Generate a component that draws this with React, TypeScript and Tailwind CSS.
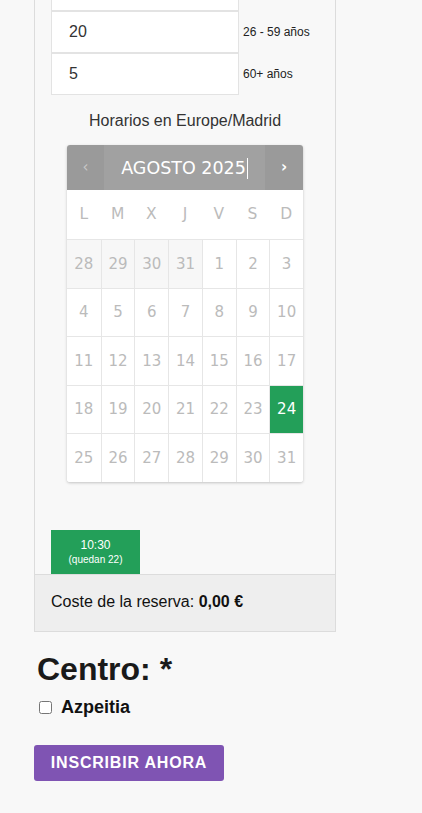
import React from 'react';

// first row sits above the top edge of the screenshot, only its bottom border shows
const ageRows = [
  { value: '', label: '' },
  { value: '20', label: '26 - 59 años' },
  { value: '5', label: '60+ años' },
];

const weekDays = ['L', 'M', 'X', 'J', 'V', 'S', 'D'];

const weeks = [
  [28, 29, 30, 31, 1, 2, 3],
  [4, 5, 6, 7, 8, 9, 10],
  [11, 12, 13, 14, 15, 16, 17],
  [18, 19, 20, 21, 22, 23, 24],
  [25, 26, 27, 28, 29, 30, 31],
];

const Calendar: React.FC = () => (
  <div className="mx-auto w-[236px] rounded-[3px] bg-white shadow-[0_1px_3px_rgba(0,0,0,0.22)] overflow-hidden font-['DejaVu_Sans',sans-serif]">
    <div className="flex h-[45px] bg-[#9a9a9a]">
      <div className="w-[37px] flex items-center justify-center text-[15px] text-[#c8c8c8]">‹</div>
      <div className="flex-1 flex items-center justify-center bg-[#a1a1a1] text-[17.5px] text-white pt-[2px]">
        <span>AGOSTO 2025</span>
        <span className="ml-px w-px h-[21px] bg-white"></span>
      </div>
      <div className="w-[38px] flex items-center justify-center text-[15px] font-bold text-white">›</div>
    </div>

    <div className="grid grid-cols-7 h-[49px] items-center text-center text-[15.5px] text-[#bbbbbb]">
      {weekDays.map((d) => (
        <span key={d}>{d}</span>
      ))}
    </div>

    {weeks.map((week, wi) => (
      <div key={wi} className="grid grid-cols-7 h-[48.6px]">
        {week.map((day, di) => {
          const otherMonth = wi === 0 && di < 4;
          const selected = wi === 3 && di === 6;
          return (
            <div
              key={di}
              className={`flex items-center justify-center border-t border-[#e6e6e6] text-[15px] ${
                di > 0 ? 'border-l' : ''
              } ${
                selected
                  ? 'bg-[#239f59] text-white'
                  : otherMonth
                  ? 'bg-[#f7f7f7] text-[#bbbbbb]'
                  : 'bg-white text-[#bbbbbb]'
              }`}
            >
              {day}
            </div>
          );
        })}
      </div>
    ))}
  </div>
);

export default function App() {
  return (
    <div className="min-h-[813px] bg-[#f8f8f8] overflow-hidden font-['Liberation_Sans',Arial,sans-serif] text-[#333]">
      <div className="ml-[34px] w-[302px] border-x border-b border-[#dcdcdc]">
        <div className="px-4">
          <div className="-mt-[31px] flex flex-col">
            {ageRows.map((row, i) => (
              <div key={i} className="flex items-center">
                <div className="w-[188px] h-[42px] border border-[#e3e3e3] bg-white pl-[17px] flex items-center text-[16px] text-[#333]">
                  {row.value}
                </div>
                <span className="ml-[4px] text-[12px] text-[#222]">{row.label}</span>
              </div>
            ))}
          </div>

          <p className="mt-[16px] text-center text-[16px] leading-[20px] text-[#333]">Horarios en Europe/Madrid</p>

          <div className="mt-[14px]">
            <Calendar />
          </div>

          <div className="mt-[48px] w-[89px] h-[44px] bg-[#239f59] text-white flex flex-col items-center justify-center">
            <span className="text-[12px] leading-[15px]">10:30</span>
            <span className="text-[10px] leading-[13px]">(quedan 22)</span>
          </div>
        </div>

        <div className="border-t border-[#dcdcdc] bg-[#eeeeee] px-4 pt-[15px] pb-[17px]">
          <p className="text-[16px] leading-[24px] text-[#111]">
            Coste de la reserva: <strong className="font-bold">0,00 €</strong>
          </p>
        </div>
      </div>

      <div className="pl-[37px]">
        <h2 className="mt-[18px] text-[32px] leading-[38px] font-bold text-[#1a1a1a]">Centro: *</h2>
        <label className="mt-[8px] flex items-center h-[24px]">
          <input type="checkbox" className="ml-[2px] w-[13px] h-[13px] accent-gray-500" />
          <span className="ml-[9px] text-[18px] font-bold text-[#111]">Azpeitia</span>
        </label>
      </div>

      <button className="ml-[34px] mt-[25px] w-[190px] h-[36px] rounded-[3px] bg-[#7f54b3] text-white text-[16px] font-bold tracking-[0.05em] uppercase">
        Inscribir ahora
      </button>
    </div>
  );
}
